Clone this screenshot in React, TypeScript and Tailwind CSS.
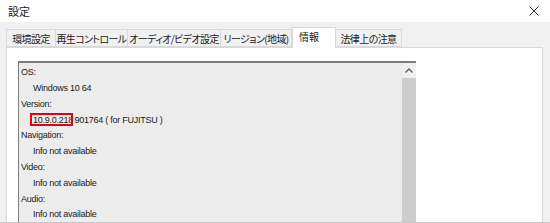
import React from 'react';

const tabs = [
  { label: '環境設定', w: 'w-[50px]' },
  { label: '再生コントロール', w: 'w-[72px]' },
  { label: 'オーディオ/ビデオ設定', w: 'w-[93px]' },
  { label: 'リージョン(地域)', w: 'w-[71px]' },
  { label: '情報', w: 'w-[44px]', active: true },
  { label: '法律上の注意', w: 'w-[66px]' },
];

const rows: { text: string; indent?: boolean; mark?: boolean }[] = [
  { text: 'OS:' },
  { text: 'Windows 10 64', indent: true },
  { text: 'Version:' },
  { text: '901764 ( for FUJITSU )', indent: true, mark: true },
  { text: 'Navigation:' },
  { text: 'Info not available', indent: true },
  { text: 'Video:' },
  { text: 'Info not available', indent: true },
  { text: 'Audio:' },
  { text: 'Info not available', indent: true },
];

const App: React.FC = () => {
  return (
    <div className="w-[550px] h-[223px] bg-white overflow-hidden flex flex-col text-[#1a1a1a] font-['Noto_Sans_CJK_JP',sans-serif]">
      {/* Title bar */}
      <div className="h-[22px] shrink-0 flex items-center justify-between pl-[8px] pr-[11px]">
        <span className="text-[11px] leading-none">設定</span>
        <svg width="10" height="10" viewBox="0 0 10 10" className="text-[#333]">
          <path d="M0.5 0.5 L9.5 9.5 M9.5 0.5 L0.5 9.5" stroke="currentColor" strokeWidth="1" />
        </svg>
      </div>

      {/* Body */}
      <div className="flex-1 min-h-0 bg-[#f0f0f0] pl-[6px] pr-[7px] pt-[5px] flex flex-col border-b border-[#c8c8c8]">
        {/* Tabs */}
        <div className="h-[20px] shrink-0 flex items-end [font-feature-settings:'palt'_1] [font-kerning:normal]">
          {tabs.map(t =>
            t.active ? (
              <div
                key={t.label}
                className={`${t.w} h-[21px] -mb-px z-10 bg-white border border-b-0 border-[#d9d9d9] pl-[6px] text-[10px] leading-[18px]`}
              >
                {t.label}
              </div>
            ) : (
              <div
                key={t.label}
                className={`${t.w} h-[18px] bg-[#f0f0f0] border border-l-0 first:border-l border-[#d9d9d9] flex justify-center text-[10px] leading-[17px] whitespace-nowrap overflow-hidden`}
              >
                <span className="tracking-[-0.6px]">{t.label}</span>
              </div>
            )
          )}
        </div>

        {/* Panel */}
        <div className="flex-1 min-h-0 bg-white border border-b-0 border-[#d9d9d9] pt-[13px] pl-[11px] pr-[126px]">
          <div className="h-full flex border-t-2 border-l border-[#7c7c7c] bg-[#ececec]">
            <div className="flex-1 pl-[2px] pt-[2px] font-['Liberation_Sans',Arial,sans-serif] text-[9px] tracking-[-0.25px]">
              {rows.map((r, i) => (
                <div key={i} className={`h-[15.8px] flex items-center whitespace-nowrap ${r.indent ? 'pl-[12px]' : ''}`}>
                  {r.mark && (
                    <span className="relative mr-[1.5px]">
                      10.9.0.218
                      <span className="absolute -left-[3px] -top-[1px] w-[43px] h-[13px] border-2 border-[#e60012]" />
                    </span>
                  )}
                  {r.text}
                </div>
              ))}
            </div>
            {/* Scrollbar */}
            <div className="w-[14px] flex flex-col">
              <div className="h-[15px] bg-[#f0f0f0] flex items-center justify-center">
                <svg width="8" height="5" viewBox="0 0 8 5">
                  <path d="M0.5 4.5 L4 1 L7.5 4.5" stroke="#606060" strokeWidth="1.4" fill="none" />
                </svg>
              </div>
              <div className="flex-1 bg-[#cdcdcd]" />
            </div>
          </div>
        </div>
      </div>
    </div>
  );
};

export default App;
